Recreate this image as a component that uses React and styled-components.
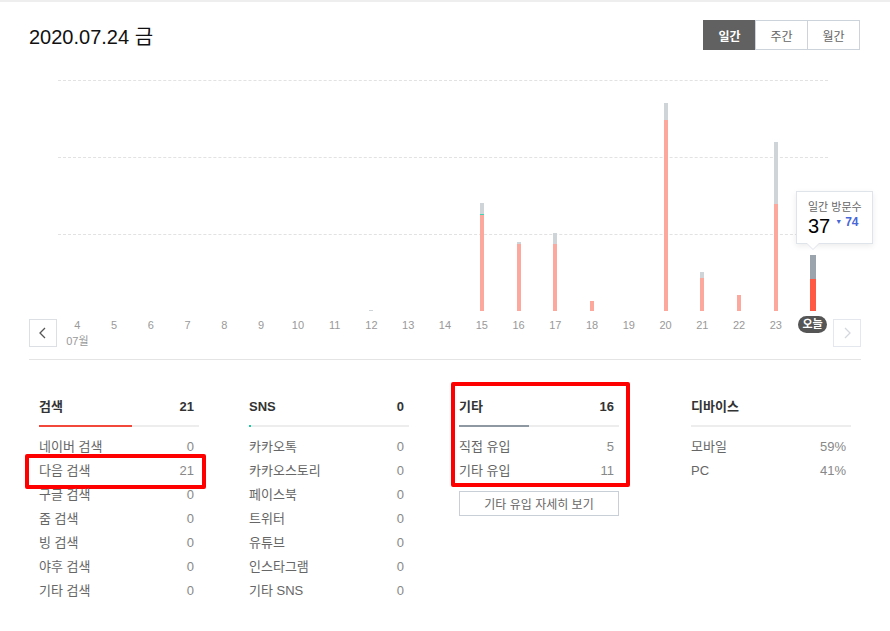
import React from 'react';
import styled, { createGlobalStyle } from 'styled-components';

const GlobalStyle = createGlobalStyle`
  body {
    margin: 0;
    border-top: 2px solid #eeeeee;
    background: #fff;
    font-family: "Liberation Sans", "Noto Sans CJK KR", sans-serif;
    color: #333;
  }
`;

const PINK = '#fda89c';
const GRAY = '#cfd4d8';

const days = [
  { label: '4', sub: '07월' },
  { label: '5' },
  { label: '6' },
  { label: '7' },
  { label: '8' },
  { label: '9' },
  { label: '10' },
  { label: '11' },
  { label: '12', gray: 1 },
  { label: '13' },
  { label: '14' },
  { label: '15', gray: 11, teal: 1, pink: 96 },
  { label: '16', gray: 2, pink: 67 },
  { label: '17', gray: 11, pink: 67 },
  { label: '18', pink: 10 },
  { label: '19' },
  { label: '20', gray: 17, pink: 191 },
  { label: '21', gray: 6, pink: 33 },
  { label: '22', pink: 16 },
  { label: '23', gray: 62, pink: 107 },
  { label: '오늘', today: true, gray: 24, pink: 32 },
];

const sections = [
  {
    title: '검색',
    total: '21',
    fill: 58,
    color: '#f2473b',
    rows: [
      ['네이버 검색', '0'],
      ['다음 검색', '21', true],
      ['구글 검색', '0'],
      ['줌 검색', '0'],
      ['빙 검색', '0'],
      ['야후 검색', '0'],
      ['기타 검색', '0'],
    ],
  },
  {
    title: 'SNS',
    total: '0',
    fill: 1.5,
    color: '#1ec8a5',
    rows: [
      ['카카오톡', '0'],
      ['카카오스토리', '0'],
      ['페이스북', '0'],
      ['트위터', '0'],
      ['유튜브', '0'],
      ['인스타그램', '0'],
      ['기타 SNS', '0'],
    ],
  },
  {
    title: '기타',
    total: '16',
    fill: 44,
    color: '#8e98a2',
    boxed: true,
    more: '기타 유입 자세히 보기',
    rows: [
      ['직접 유입', '5'],
      ['기타 유입', '11'],
    ],
  },
  {
    title: '디바이스',
    total: '',
    fill: 0,
    color: '#ccc',
    rows: [
      ['모바일', '59%'],
      ['PC', '41%'],
    ],
  },
];

const App = () => {
  return (
    <>
      <GlobalStyle />
      <Page>
        <Header>
          <Title>2020.07.24 금</Title>
          <Tabs>
            <Tab $active>일간</Tab>
            <Tab>주간</Tab>
            <Tab>월간</Tab>
          </Tabs>
        </Header>

        <Chart>
          <Plot>
            <GridLayer>
              <GridLine />
              <GridLine />
              <GridLine />
            </GridLayer>
            <BarsLayer>
              {days.map((d) => (
                <BarCell key={d.label}>
                  {d.gray ? (
                    <Segment
                      $h={d.gray}
                      $w={d.today ? 6 : 4}
                      $color={d.today ? '#9ba3ac' : GRAY}
                    />
                  ) : null}
                  {d.teal ? <Segment $h={d.teal} $w={4} $color="#3fd6b5" /> : null}
                  {d.pink ? (
                    <Segment
                      $h={d.pink}
                      $w={d.today ? 6 : 4}
                      $color={d.today ? '#ff5843' : PINK}
                    />
                  ) : null}
                </BarCell>
              ))}
            </BarsLayer>
            <Tooltip>
              <TipLabel>일간 방문수</TipLabel>
              <TipValue>
                37
                <TipDiff>
                  <small>▼</small>74
                </TipDiff>
              </TipValue>
            </Tooltip>
          </Plot>
          <ArrowButton $side="left">
            <Chevron viewBox="0 0 10 16" $color="#555">
              <path d="M7 3 L2 8 L7 13" />
            </Chevron>
          </ArrowButton>
          <Axis>
            {days.map((d) => (
              <DayLabel key={d.label}>
                {d.today ? <TodayPill>{d.label}</TodayPill> : d.label}
                {d.sub ? <Month>{d.sub}</Month> : null}
              </DayLabel>
            ))}
          </Axis>
          <ArrowButton $side="right" $disabled>
            <Chevron viewBox="0 0 10 16" $color="#d3d8de">
              <path d="M3 3 L8 8 L3 13" />
            </Chevron>
          </ArrowButton>
        </Chart>

        <Stats>
          {sections.map((s) => (
            <Section key={s.title}>
              <SectionBody $boxed={s.boxed}>
                <SectionHead>
                  <span>{s.title}</span>
                  <strong>{s.total}</strong>
                </SectionHead>
                <Track>
                  <Fill style={{ width: `${s.fill}%` }} $color={s.color} />
                </Track>
                <Rows>
                  {s.rows.map(([name, value, marked]) => (
                    <Row key={name} $marked={marked}>
                      <span>{name}</span>
                      <em>{value}</em>
                    </Row>
                  ))}
                </Rows>
              </SectionBody>
              {s.more ? <MoreButton>{s.more}</MoreButton> : null}
            </Section>
          ))}
        </Stats>
      </Page>
    </>
  );
};

const Page = styled.div`
  width: 832px;
  padding: 0 29px;
`;

const Header = styled.header`
  display: flex;
  justify-content: space-between;
  align-items: flex-start;
  padding-top: 18px;
`;

const Title = styled.h1`
  margin: 2px 0 0;
  font-size: 20px;
  font-weight: 400;
  color: #111;
  line-height: 30px;
`;

const Tabs = styled.div`
  display: flex;
  margin-right: 1px;
`;

const Tab = styled.button`
  width: 53px;
  height: 30px;
  padding: 0;
  font-family: inherit;
  font-size: 12px;
  font-weight: ${(p) => (p.$active ? 700 : 400)};
  color: ${(p) => (p.$active ? '#fff' : '#666')};
  background: ${(p) => (p.$active ? '#616161' : '#fff')};
  border: 1px solid ${(p) => (p.$active ? '#616161' : '#cdd3db')};
  & + & {
    margin-left: -1px;
  }
`;

const Chart = styled.section`
  display: grid;
  grid-template-columns: 28px 772px 28px;
  grid-template-rows: 230px auto;
  column-gap: 2px;
  margin-top: 28px;
  padding-bottom: 10px;
  border-bottom: 1px solid #e4e4e4;
`;

const Plot = styled.div`
  grid-column: 2;
  grid-row: 1;
  position: relative;
  display: grid;
  & > * {
    grid-area: 1 / 1;
  }
`;

const GridLayer = styled.div`
  display: flex;
  flex-direction: column;
  margin-left: -1px;
  margin-right: 3px;
`;

const GridLine = styled.div`
  height: 76px;
  border-top: 1px dashed #e2e2e2;
`;

const BarsLayer = styled.div`
  display: grid;
  grid-template-columns: repeat(21, 1fr);
`;

const BarCell = styled.div`
  display: flex;
  flex-direction: column;
  justify-content: flex-end;
  align-items: center;
`;

const Segment = styled.div`
  width: ${(p) => p.$w}px;
  height: ${(p) => p.$h}px;
  background: ${(p) => p.$color};
`;

const Tooltip = styled.div`
  position: absolute;
  top: 111px;
  right: -42px;
  width: 77px;
  height: 53px;
  box-sizing: border-box;
  padding: 8px 0 0 11px;
  background: #fff;
  border: 1px solid #dfe3ea;
  box-shadow: 0 2px 6px rgba(0, 0, 0, 0.08);

  &::before,
  &::after {
    content: '';
    position: absolute;
    left: 10px;
    border: 6px solid transparent;
    border-bottom: 0;
  }
  &::before {
    bottom: -7px;
    border-top: 6px solid #dfe3ea;
  }
  &::after {
    bottom: -6px;
    border-top: 6px solid #fff;
  }
`;

const TipLabel = styled.div`
  font-size: 11px;
  line-height: 14px;
  color: #666;
`;

const TipValue = styled.div`
  display: flex;
  align-items: flex-start;
  font-size: 20px;
  line-height: 24px;
  color: #000;
`;

const TipDiff = styled.span`
  margin: 1px 0 0 5px;
  font-size: 12px;
  line-height: 14px;
  font-weight: 700;
  color: #4766d8;
  small {
    font-size: 7px;
    margin-right: 3px;
    vertical-align: 2px;
  }
`;

const ArrowButton = styled.button`
  grid-column: ${(p) => (p.$side === 'left' ? 1 : 3)};
  grid-row: 2;
  align-self: start;
  margin-top: 9px;
  width: 28px;
  height: 28px;
  padding: 0;
  display: grid;
  place-items: center;
  background: #fff;
  border: 1px solid ${(p) => (p.$disabled ? '#e4e8ee' : '#dcdfe4')};
`;

const Chevron = styled.svg`
  width: 10px;
  height: 16px;
  fill: none;
  stroke: ${(p) => p.$color};
  stroke-width: 1.3;
`;

const Axis = styled.div`
  grid-column: 2;
  grid-row: 2;
  display: grid;
  grid-template-columns: repeat(21, 1fr);
  padding-top: 7px;
`;

const DayLabel = styled.div`
  display: flex;
  flex-direction: column;
  align-items: center;
  font-size: 11px;
  line-height: 16px;
  color: #999;
`;

const Month = styled.span`
  font-size: 11px;
  color: #999;
`;

const TodayPill = styled.span`
  margin-top: -1px;
  padding: 0 4px;
  height: 17px;
  line-height: 17px;
  border-radius: 9px;
  background: #555;
  color: #fff;
  font-size: 11px;
  font-weight: 700;
`;

const Stats = styled.section`
  display: grid;
  grid-template-columns: 210px 210px 232px 160px;
  padding: 37px 0 0 10px;
`;

const Section = styled.div`
  width: 160px;
`;

const SectionBody = styled.div`
  position: relative;
  ${(p) =>
    p.$boxed &&
    `
    &::after {
      content: '';
      position: absolute;
      inset: -15px -11px -4px -8px;
      border: 4px solid #ff0000;
      border-radius: 2px;
    }
  `}
`;

const SectionHead = styled.div`
  display: flex;
  justify-content: space-between;
  padding-right: 5px;
  height: 20px;
  line-height: 20px;
  font-size: 13px;
  font-weight: 700;
  color: #333;

  strong {
    font-size: 13px;
    color: #333;
  }
`;

const Track = styled.div`
  height: 2px;
  margin: 8px 0;
  background: #ededed;
`;

const Fill = styled.div`
  height: 100%;
  background: ${(p) => p.$color};
`;

const Rows = styled.div`
  display: flex;
  flex-direction: column;
`;

const Row = styled.div`
  position: relative;
  display: flex;
  justify-content: space-between;
  height: 24px;
  line-height: 24px;
  padding-right: 5px;
  font-size: 13px;
  color: #666;

  em {
    font-style: normal;
    color: #888;
  }

  ${(p) =>
    p.$marked &&
    `
    &::after {
      content: '';
      position: absolute;
      inset: -5px -7px -6px -14px;
      border: 4px solid #ff0000;
      border-radius: 2px;
    }
  `}
`;

const MoreButton = styled.button`
  width: 160px;
  height: 25px;
  margin-top: 8px;
  padding: 0;
  font-family: inherit;
  font-size: 12px;
  color: #666;
  background: #fff;
  border: 1px solid #c9cfd7;
`;

export default App;
